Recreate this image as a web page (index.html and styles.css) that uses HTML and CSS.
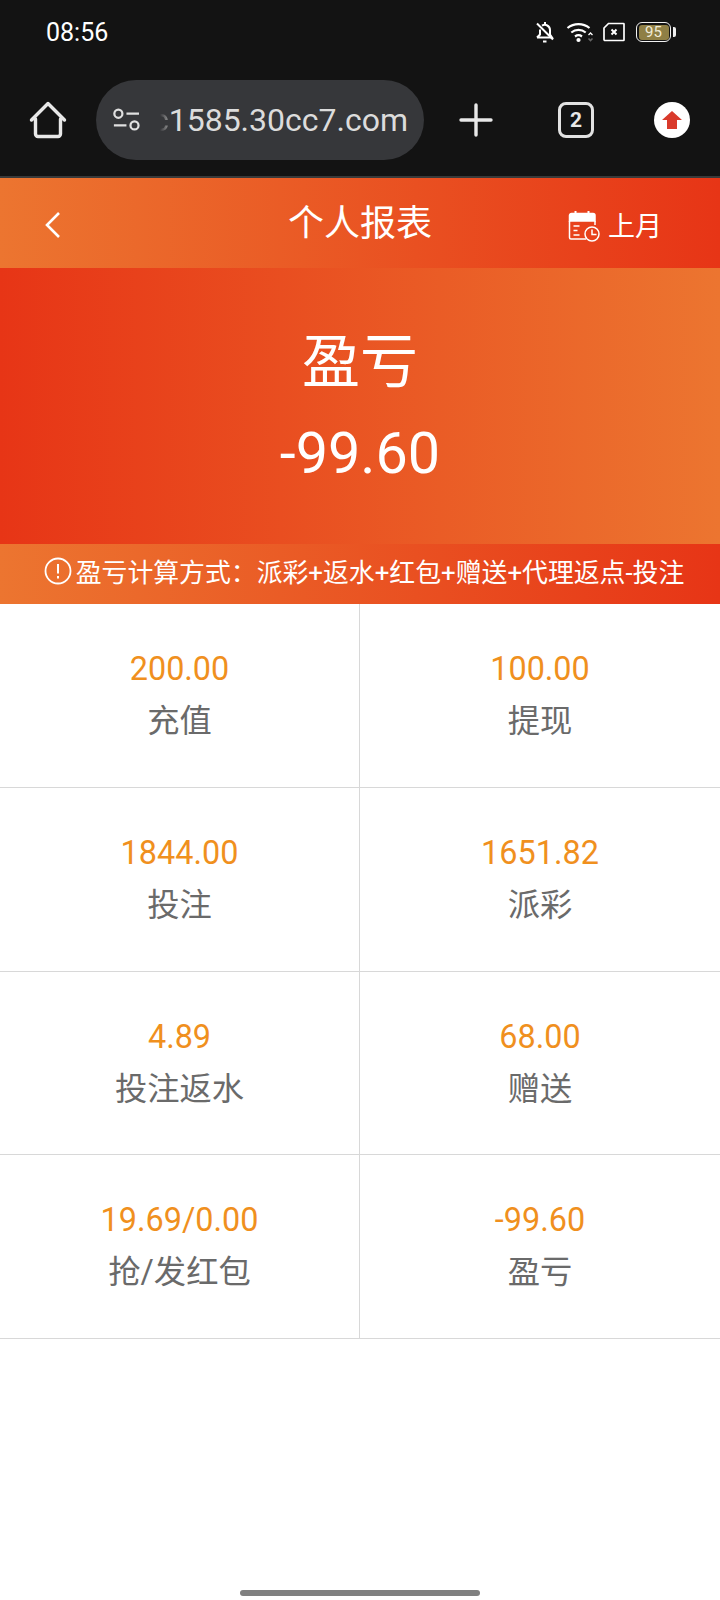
FILE: index.html
```html
<!DOCTYPE html>
<html lang="zh">
<head>
<meta charset="utf-8">
<title>个人报表</title>
<meta name="viewport" content="width=device-width, initial-scale=1.0">
<link rel="stylesheet" href="styles.css">
</head>
<body>
<div class="chrome">
  <div class="status">
    <span class="time">08:56</span>
    <div class="status-icons">
      <svg width="20" height="22" viewBox="0 0 20 22" fill="none" stroke="#fff" stroke-width="2"><path d="M2 16.500h15l-2-3V9a5.200 5.200 0 0 0-8-4.300M5 8.500v5l-3 3"/><path d="M10 1v2" /><path d="M2 2.500l16 16"/><path d="M8 20.500h3.500"/></svg>
      <svg class="wifi" width="28" height="22" viewBox="0 0 28 22" fill="none" stroke="#fff" stroke-width="2.200"><path d="M1.500 7a17.500 17.500 0 0 1 22 0M5.300 11.500a11.500 11.500 0 0 1 14.400 0M9 15.500a6 6 0 0 1 7 0"/><circle cx="12.500" cy="19" r="2.100" fill="#fff" stroke="none"/><path d="M22.500 14l2-2 2 2" stroke-width="1.300"/><path d="M22.500 17.500l2 2 2-2" stroke="#666" stroke-width="1.600"/></svg>
      <svg class="sim" width="22" height="20" viewBox="0 0 22 20" fill="none" stroke="#fff" stroke-width="1.700"><path d="M5.500 1.500h15a.5.500 0 0 1 .5.500v16a.5.500 0 0 1-.5.500H2a1 1 0 0 1-1-1V6z"/><path d="M8.500 7.500l5 5M13.500 7.500l-5 5" stroke-width="2"/></svg>
      <div class="battery"><span class="battery-fill">95</span></div>
    </div>
  </div>
  <div class="toolbar">
    <svg class="home" width="38" height="38" viewBox="0 0 38 38" fill="none" stroke="#e8e8e8" stroke-width="3.400" stroke-linejoin="round" stroke-linecap="round"><path d="M2.500 19L19 2.500 35.500 19M6.500 18v15a2.500 2.500 0 0 0 2.500 2.500h20a2.500 2.500 0 0 0 2.500-2.500V18"/></svg>
    <div class="urlbar">
      <svg width="32" height="28" viewBox="0 0 32 28" fill="none" stroke="#e0e0e0" stroke-width="2.500"><circle cx="6" cy="7" r="4.500"/><path d="M15 7h14M1 20h14"/><circle cx="24" cy="20" r="4.500"/></svg>
      <span class="url"><span class="url-fade">c</span>1585.30cc7.com</span>
    </div>
    <svg class="plus" width="34" height="34" viewBox="0 0 34 34" stroke="#e8e8e8" stroke-width="3.400" stroke-linecap="round"><path d="M17 2v30M2 17h30"/></svg>
    <div class="tabs">2</div>
    <div class="update"><svg width="20" height="18" viewBox="0 0 20 18"><path d="M10 0l10 9h-5v9H5V9H0z" fill="#d93a2b"/></svg></div>
  </div>
</div>

<div class="head">
  <svg class="back" width="18" height="28" viewBox="0 0 18 28" fill="none" stroke="#fff" stroke-width="2.600"><path d="M15 2L3 14l12 12"/></svg>
  <h1>个人报表</h1>
  <div class="month">
    <svg width="32" height="32" viewBox="0 0 32 32" fill="none" stroke="#fff" stroke-width="1.500"><path d="M1.500 5.500a2 2 0 0 1 2-2h21.500a2 2 0 0 1 2 2V11H1.500z" fill="#fff"/><path d="M7.500 1v4M20.500 1v4" stroke-width="2"/><path d="M1.500 11v16.500a1.500 1.500 0 0 0 1.500 1.500h15M27 11v4"/><path d="M5.500 16h6M5.500 20.500h4M5.500 25h6"/><circle cx="24" cy="24" r="7"/><path d="M24 19.500V24.500h4.500"/></svg>
    <span>上月</span>
  </div>
</div>

<div class="hero">
  <div class="hero-label">盈亏</div>
  <div class="hero-value">-99.60</div>
</div>

<div class="notice">
  <svg width="28" height="28" viewBox="0 0 28 28" fill="none" stroke="#fff" stroke-width="1.800"><circle cx="14" cy="14" r="12.500"/><path d="M14 7v9.500M14 19v2.500" stroke-width="2"/></svg>
  <span>盈亏计算方式：派彩+返水+红包+赠送+代理返点-投注</span>
</div>

<div class="grid">
  <div class="cell"><b>200.00</b><span>充值</span></div>
  <div class="cell"><b>100.00</b><span>提现</span></div>
  <div class="cell"><b>1844.00</b><span>投注</span></div>
  <div class="cell"><b>1651.82</b><span>派彩</span></div>
  <div class="cell"><b>4.89</b><span>投注返水</span></div>
  <div class="cell"><b>68.00</b><span>赠送</span></div>
  <div class="cell"><b>19.69/0.00</b><span>抢/发红包</span></div>
  <div class="cell"><b>-99.60</b><span>盈亏</span></div>
</div>

<div class="gesture"></div>
</body>
</html>
```

FILE: styles.css
```css
* {
    box-sizing: border-box;
}
html, body {
    margin: 0;
    padding: 0;
}
body {
    width: 720px;
    height: 1600px;
    position: relative;
    overflow: hidden;
    background: #fff;
    font-family: Roboto, "Noto Sans CJK SC", sans-serif;
}

/* phone + browser bar */
.chrome {
    height: 178px;
    background: #131313;
    border-bottom: 2px solid #3a3a3a;
}
.status {
    height: 62px;
    padding: 2px 49px 0 46px;
    display: flex;
    align-items: center;
    justify-content: space-between;
    color: #fff;
}
.time {
    font-size: 25px;
}
.status-icons {
    display: flex;
    align-items: center;
    gap: 9px;
}
.wifi {
    margin-left: 2px;
}
.battery {
    width: 35px;
    height: 20px;
    margin-left: 2px;
    padding: 1.500px;
    border: 1.500px solid #f2f2f2;
    border-radius: 6px;
    position: relative;
}
.battery:after {
    content: "";
    position: absolute;
    right: -5.500px;
    top: 3.500px;
    width: 3px;
    height: 10px;
    background: #eee;
    border-radius: 0 2px 2px 0;
}
.battery-fill {
    display: block;
    height: 100%;
    background: #8f7f45;
    border-radius: 3px;
    color: #f1ecd8;
    font-size: 15px;
    line-height: 14px;
    text-align: center;
}
.toolbar {
    height: 114px;
    padding: 2px 0 0 29px;
    display: flex;
    align-items: center;
}
.urlbar {
    width: 328px;
    height: 80px;
    margin-left: 29px;
    padding: 0 16px 0 17px;
    background: #36373a;
    border-radius: 40px;
    display: flex;
    align-items: center;
    overflow: hidden;
}
.url {
    margin-left: 18px;
    color: #dcdcdc;
    font-size: 32px;
    white-space: nowrap;
    display: flex;
}
.url-fade {
    width: 9px;
    overflow: hidden;
    direction: rtl;
    -webkit-mask-image: linear-gradient(90deg, transparent, #000);
    mask-image: linear-gradient(90deg, transparent, #000);
    color: #999;
}
.plus {
    margin-left: 35px;
}
.tabs {
    width: 36px;
    height: 36px;
    margin-left: 65px;
    border: 3px solid #e2e2e2;
    border-radius: 8px;
    color: #e8e8e8;
    font-size: 21px;
    font-weight: bold;
    line-height: 30px;
    text-align: center;
}
.update {
    width: 36px;
    height: 36px;
    margin-left: 60px;
    background: #fff;
    border-radius: 50%;
    display: flex;
    align-items: center;
    justify-content: center;
}

/* page header */
.head {
    height: 90px;
    padding-bottom: 6px;
    background: linear-gradient(90deg, #ec7530, #e73516);
    display: flex;
    align-items: center;
    justify-content: center;
    position: relative;
    color: #fff;
}
.head h1 {
    margin: 0;
    font-size: 36px;
    font-weight: normal;
}
.back {
    position: absolute;
    left: 44px;
    top: 33px;
}
.month {
    position: absolute;
    left: 568px;
    top: 29px;
    display: flex;
    align-items: center;
    gap: 8px;
    font-size: 27px;
}
.month span {
    margin-top: -2px;
}
.hero {
    height: 276px;
    background: linear-gradient(90deg, #e73516, #ec7530);
    color: #fff;
    text-align: center;
    padding-top: 58px;
}
.hero-label {
    font-size: 58px;
    line-height: 72px;
}
.hero-value {
    font-size: 57.500px;
    line-height: 72px;
    margin-top: 20px;
}
.notice {
    height: 60px;
    padding: 0 0 7px 8px;
    background: linear-gradient(90deg, #ec7530, #e73516);
    color: #fff;
    font-size: 25.850px;
    display: flex;
    align-items: center;
    justify-content: center;
    gap: 4px;
    white-space: nowrap;
}

/* numbers */
.grid {
    display: grid;
    grid-template-columns: 360px 360px;
    grid-auto-rows: 183.750px;
}
.cell {
    border-bottom: 1px solid #d8d8d8;
    display: flex;
    flex-direction: column;
    align-items: center;
    padding-top: 45px;
}
.cell:nth-child(odd) {
    border-right: 1px solid #d8d8d8;
}
.cell b {
    color: #f0901e;
    font-size: 32.400px;
    font-weight: normal;
    line-height: 40px;
}
.cell span {
    color: #6a6a6a;
    font-size: 32.300px;
    line-height: 44px;
    margin-top: 10px;
}
.gesture {
    position: absolute;
    left: 240px;
    bottom: 4px;
    width: 240px;
    height: 6px;
    background: #808080;
    border-radius: 3px;
}
```
